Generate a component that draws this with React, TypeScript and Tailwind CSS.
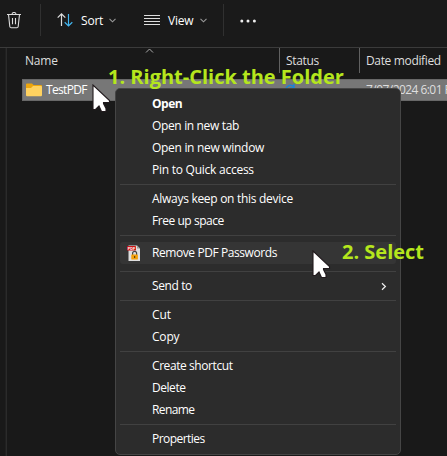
import React from 'react';

type Item = { label: string; w: string; bold?: boolean; arrow?: boolean; icon?: boolean };

const groups: Item[][] = [
  [
    { label: 'Open', w: 'tracking-[-0.5px]', bold: true },
    { label: 'Open in new tab', w: 'tracking-[-0.35px]' },
    { label: 'Open in new window', w: 'tracking-[-0.3px]' },
    { label: 'Pin to Quick access', w: 'tracking-[-0.25px]' },
  ],
  [
    { label: 'Always keep on this device', w: 'tracking-[-0.29px]' },
    { label: 'Free up space', w: 'tracking-[-0.45px]' },
  ],
  [{ label: 'Remove PDF Passwords', w: 'tracking-[-0.42px]', icon: true }],
  [{ label: 'Send to', w: 'tracking-[-0.4px]', arrow: true }],
  [
    { label: 'Cut', w: 'tracking-[-0.1px]' },
    { label: 'Copy', w: 'tracking-[-0.2px]' },
  ],
  [
    { label: 'Create shortcut', w: 'tracking-[-0.42px]' },
    { label: 'Delete', w: 'tracking-[-0.45px]' },
    { label: 'Rename', w: 'tracking-[-0.6px]' },
  ],
  [{ label: 'Properties', w: 'tracking-[-0.55px]' }],
];

function Chevron({ className }: { className: string }) {
  return (
    <svg className={className} width="7" height="5" viewBox="0 0 7 5" fill="none" stroke="#999" strokeWidth="1.1">
      <path d="M.5 .8 3.5 3.8 6.5 .8" />
    </svg>
  );
}

function Cursor({ className }: { className: string }) {
  return (
    <svg className={className} width="19" height="29" viewBox="0 0 19 29">
      <path d="M1 1V25.5H3.5L7 22 9.5 27.5H14V24.5L11.5 19.5V18.5H17.5V16.5Z" fill="#fff" stroke="#211a1d" strokeWidth="1.1" />
    </svg>
  );
}

function PdfIcon() {
  return (
    <svg width="14" height="17" viewBox="0 0 14 17">
      <path d="M1.5 .5H10L13 3.5V16H1.5Z" fill="#dedede" />
      <path d="M10 .5V3.5H13Z" fill="#999" />
      <rect x="0" y="1" width="9" height="4.6" rx=".7" fill="#c91518" />
      <text x=".8" y="4.6" fontSize="3.7" fontWeight="700" fill="#fff" className="font-['Liberation_Sans',sans-serif]">PDF</text>
      <path d="M5.6 10V8.3a2 2 0 0 1 4 0V10" fill="none" stroke="#454545" strokeWidth="1.2" />
      <rect x="4.3" y="9.5" width="6.6" height="5" rx=".5" fill="#f5a00a" />
      <rect x="7.1" y="11" width="1.1" height="2" fill="#503c14" />
    </svg>
  );
}

function MenuItem({ item }: { item: Item }) {
  return (
    <div className={`mx-1 flex h-[22px] items-center rounded-[3px] text-white ${item.icon ? 'bg-[#353535]' : ''}`}>
      <div className="flex w-8 justify-center pr-[4px]">{item.icon && <PdfIcon />}</div>
      <span className={`whitespace-nowrap ${item.bold ? 'font-bold' : ''} ${item.w}`}>{item.label}</span>
      {item.arrow && (
        <svg className="mr-[9px] ml-auto" width="6" height="9" viewBox="0 0 6 9" fill="none" stroke="#eee" strokeWidth="1.2">
          <path d="M1 1.2 4.4 4.5 1 7.8" />
        </svg>
      )}
    </div>
  );
}

export default function App() {
  return (
    <div className="relative h-[456px] w-[447px] overflow-hidden bg-[#191919] font-['Open_Sans','Noto_Sans',sans-serif] text-[12px] leading-[16px] text-white">
      <div className="flex h-12 border-b border-[#3b3b3b] bg-[#1a1a1a]">
        <div className="flex w-10 pt-3 pl-[7px]">
          <svg width="14" height="17" viewBox="0 0 14 17" fill="none" stroke="#ddd" strokeWidth="1.1">
            <path d="M0 2.5H14M5 2.5Q5 .5 7 .5T9 2.5M1.5 2.5 2.8 14.5Q3 15.8 4.2 15.8H9.8Q11 15.8 11.2 14.5L12.5 2.5M5.5 6V12.2M8.5 6V12.2" />
          </svg>
        </div>
        <div className="mt-1 h-8 w-px bg-[#303030]" />
        <div className="flex w-[182px] pl-4">
          <svg className="mt-[13px]" width="16" height="14" viewBox="0 0 16 14" fill="none" strokeWidth="1.2">
            <path d="M4.5 13V1M.7 4.7 4.5 .9 8.3 4.7" stroke="#ddd" />
            <path d="M11.5 1V13M7.7 9.3 11.5 13 15.3 9.3" stroke="#42b5ef" />
          </svg>
          <span className="mt-[13px] ml-2 w-[22px] tracking-[-0.2px]">Sort</span>
          <Chevron className="mt-[18px] ml-[6px]" />
          <svg className="mt-[14px] ml-[28px]" width="16" height="12" viewBox="0 0 16 12" stroke="#ddd" strokeWidth="1">
            <path d="M0 1.5H16M0 4.5H16M0 7.5H16M0 10.5H16" />
          </svg>
          <span className="mt-[13px] ml-2 w-[26px] tracking-[-0.2px]">View</span>
          <Chevron className="mt-[18px] ml-[6px]" />
        </div>
        <div className="mt-1 h-8 w-px bg-[#303030]" />
        <svg className="mt-[19px] ml-4" width="17" height="4" viewBox="0 0 17 4" fill="#eee">
          <circle cx="1.8" cy="2" r="1.5" />
          <circle cx="8" cy="2" r="1.5" />
          <circle cx="14.4" cy="2" r="1.5" />
        </svg>
      </div>
      <div className="flex h-[408px]">
        <div className="w-[5px] bg-[#191919]" />
        <div className="w-px bg-[#202020]" />
        <div className="w-px bg-[#2b2b2b]" />
        <div className="w-[440px] shrink-0 pl-[15px]">
          <div className="flex h-[31px] text-[#dedede]">
            <div className="w-[257px] pt-[5px] pl-[3px] tracking-[-0.2px]">Name</div>
            <div className="flex w-20">
              <div className="h-[25px] w-px bg-[#616161]" />
              <span className="ml-[6px] pt-[5px] tracking-[-0.35px]">Status</span>
            </div>
            <div className="flex">
              <div className="h-[25px] w-px bg-[#616161]" />
              <span className="ml-[6px] pt-[5px] whitespace-nowrap tracking-[-0.35px]">Date modified</span>
            </div>
          </div>
          <div className="flex h-[22px] items-center overflow-hidden border border-r-0 border-[#686868] bg-[#777] pl-[3px]">
            <svg className="shrink-0" width="16" height="14" viewBox="0 0 16 14">
              <path d="M0 1.5Q0 .5 1 .5H6L7.5 2H15Q16 2 16 3V6H0Z" fill="#eea60c" />
              <path d="M0 5H5L7 3H15Q16 3 16 4V12Q16 13.3 15 13.3H1Q0 13.3 0 12Z" fill="#ffd260" />
            </svg>
            <span className="ml-1 w-[300px] shrink-0 tracking-[-0.65px]">TestPDF</span>
            <span className="ml-[20px] shrink-0 whitespace-nowrap tracking-[-0.55px] text-[#dedede]">7/07/2024 6:01 PM</span>
          </div>
        </div>
      </div>
      <svg className="absolute top-[48px] left-[145px]" width="9" height="6" fill="none" stroke="#aaa">
        <path d="M1 4.5 4.5 1 8 4.5" />
      </svg>
      <svg className="absolute top-[84px] left-[285px]" width="12" height="5" fill="none" stroke="#1684da" strokeWidth="1.3">
        <path d="M1 4Q5 -1 9 3M9 0V4H5" />
      </svg>
      <div className="absolute top-[88px] left-[115px] h-[367px] w-[286px] rounded-[5px] border border-[#454545] bg-[#2c2c2c] pt-1">
        {groups.map((group, i) => (
          <div key={i}>
            {i > 0 && <div className={`mx-1 h-px bg-[#414141] ${i === 2 ? 'mb-[6px]' : 'mb-[3px]'} ${i === 3 ? 'mt-[7px]' : 'mt-[3px]'}`} />}
            {group.map((item) => <MenuItem key={item.label} item={item} />)}
          </div>
        ))}
      </div>
      <div className="absolute top-[64px] left-[108px] text-[20px] leading-[26px] font-bold whitespace-nowrap text-[#b5e61d]">1. Right-Click the Folder</div>
      <div className="absolute top-[239px] left-[342px] text-[20px] leading-[26px] font-bold whitespace-nowrap text-[#b5e61d]">2. Select</div>
      <Cursor className="absolute top-[84px] left-[92px]" />
      <Cursor className="absolute top-[250px] left-[312px]" />
    </div>
  );
}
